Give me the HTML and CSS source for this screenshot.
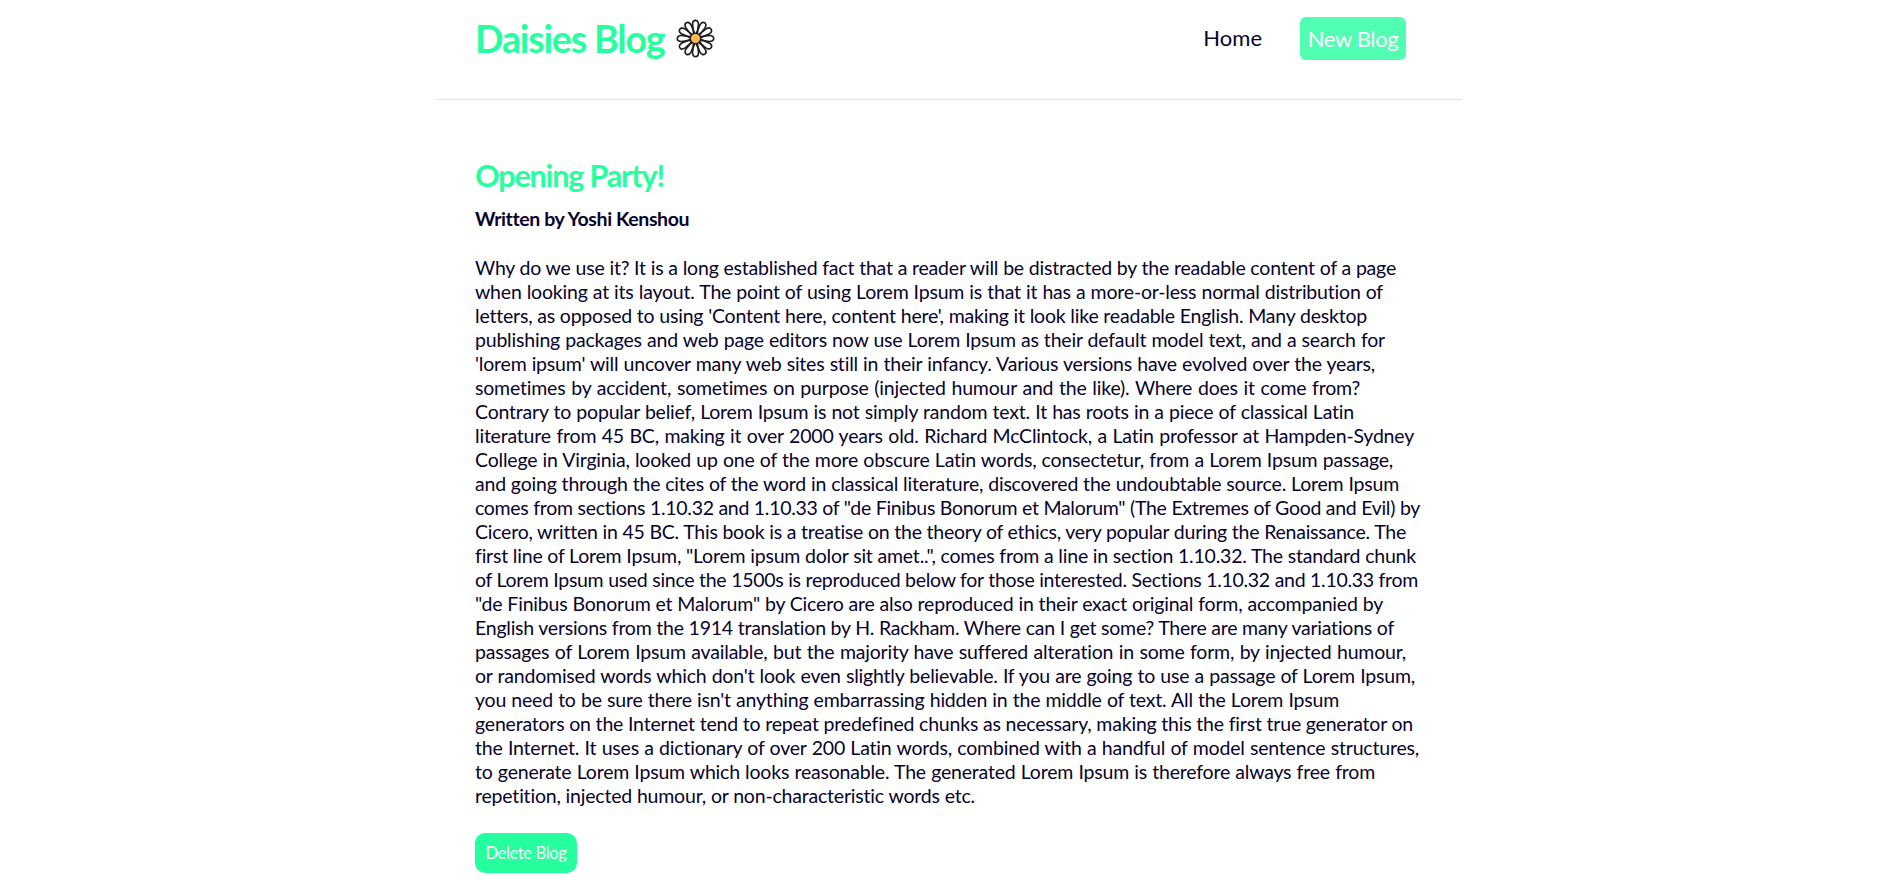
FILE: index.html
```
<!DOCTYPE html>
<html lang="en">
<head>
<meta charset="utf-8">
<title>Daisies Blog</title>
<link rel="stylesheet" href="styles.css">
</head>
<body>
<div class="page">
  <header class="navbar">
    <h1 class="brand"><span class="brand-name">Daisies Blog</span>
      <svg class="daisy" viewBox="-20 -20 40 40" aria-hidden="true">
        <defs><path id="petal" d="M0-3C-2-7-2.9-10-2.9-13.7C-2.9-19.1 2.9-19.1 2.9-13.7C2.9-10 2-7 0-3Z"/></defs>
        <g class="petals">
          <use href="#petal"/><use href="#petal" transform="rotate(30)"/><use href="#petal" transform="rotate(60)"/><use href="#petal" transform="rotate(90)"/><use href="#petal" transform="rotate(120)"/><use href="#petal" transform="rotate(150)"/><use href="#petal" transform="rotate(180)"/><use href="#petal" transform="rotate(210)"/><use href="#petal" transform="rotate(240)"/><use href="#petal" transform="rotate(270)"/><use href="#petal" transform="rotate(300)"/><use href="#petal" transform="rotate(330)"/>
        </g>
        <circle class="eye" r="5"/>
      </svg>
    </h1>
    <nav class="links"><a class="home">Home</a><a class="new-blog">New Blog</a></nav>
  </header>
  <article class="post">
    <h2 class="title">Opening Party!</h2>
    <p class="author">Written by Yoshi Kenshou</p>
    <div class="body">
      <span style="width:921px">Why do we use it? It is a long established fact that a reader will be distracted by the readable content of a page</span>
      <span style="width:908px">when looking at its layout. The point of using Lorem Ipsum is that it has a more-or-less normal distribution of</span>
      <span style="width:892px">letters, as opposed to using 'Content here, content here', making it look like readable English. Many desktop</span>
      <span style="width:910px">publishing packages and web page editors now use Lorem Ipsum as their default model text, and a search for</span>
      <span style="width:900px">'lorem ipsum' will uncover many web sites still in their infancy. Various versions have evolved over the years,</span>
      <span style="width:885px">sometimes by accident, sometimes on purpose (injected humour and the like). Where does it come from?</span>
      <span style="width:879px">Contrary to popular belief, Lorem Ipsum is not simply random text. It has roots in a piece of classical Latin</span>
      <span style="width:939px">literature from 45 BC, making it over 2000 years old. Richard McClintock, a Latin professor at Hampden-Sydney</span>
      <span style="width:918px">College in Virginia, looked up one of the more obscure Latin words, consectetur, from a Lorem Ipsum passage,</span>
      <span style="width:924px">and going through the cites of the word in classical literature, discovered the undoubtable source. Lorem Ipsum</span>
      <span class="tight" style="width:945px">comes from sections 1.10.32 and 1.10.33 of "de Finibus Bonorum et Malorum" (The Extremes of Good and Evil) by</span>
      <span class="snug" style="width:931px">Cicero, written in 45 BC. This book is a treatise on the theory of ethics, very popular during the Renaissance. The</span>
      <span style="width:941px">first line of Lorem Ipsum, "Lorem ipsum dolor sit amet..", comes from a line in section 1.10.32. The standard chunk</span>
      <span class="tight" style="width:943px">of Lorem Ipsum used since the 1500s is reproduced below for those interested. Sections 1.10.32 and 1.10.33 from</span>
      <span style="width:908px">"de Finibus Bonorum et Malorum" by Cicero are also reproduced in their exact original form, accompanied by</span>
      <span class="snug" style="width:919px">English versions from the 1914 translation by H. Rackham. Where can I get some? There are many variations of</span>
      <span style="width:931px">passages of Lorem Ipsum available, but the majority have suffered alteration in some form, by injected humour,</span>
      <span style="width:940px">or randomised words which don't look even slightly believable. If you are going to use a passage of Lorem Ipsum,</span>
      <span style="width:864px">you need to be sure there isn't anything embarrassing hidden in the middle of text. All the Lorem Ipsum</span>
      <span style="width:938px">generators on the Internet tend to repeat predefined chunks as necessary, making this the first true generator on</span>
      <span style="width:944px">the Internet. It uses a dictionary of over 200 Latin words, combined with a handful of model sentence structures,</span>
      <span style="width:900px">to generate Lorem Ipsum which looks reasonable. The generated Lorem Ipsum is therefore always free from</span>
      <span style="width:500px">repetition, injected humour, or non-characteristic words etc.</span>
    </div>
    <button class="delete">Delete Blog</button>
  </article>
</div>
</body>
</html>
```

FILE: styles.css
```
* { box-sizing: border-box; margin: 0; padding: 0; }
body { background: #fff; color: #08042c; font-family: Lato, "Open Sans", sans-serif; overflow: hidden; }
.page { width: 1025px; margin-left: 437px; }
.navbar { height: 100px; padding: 17px 56px 0 38px; border-bottom: 1px solid #e1e5c8; display: flex; justify-content: space-between; align-items: flex-start; }
.brand { display: flex; align-items: center; gap: 11px; height: 43px; font-size: 37.5px; line-height: 43px; font-weight: 700; color: #26ff9d; letter-spacing: -1.15px; white-space: nowrap; }
.daisy { width: 41px; height: 41px; }
.petals { fill: #fff; stroke: #1c1c20; stroke-width: 1.6; }
.eye { fill: #fdb94e; stroke: #1c1c20; stroke-width: 1.1; }
.links { display: flex; font-size: 22px; line-height: 42px; gap: 38px; }
.new-blog { width: 106px; height: 43px; border-radius: 6px; background: #50ffb1; color: #fff; line-height: 43px; letter-spacing: -.35px; text-align: center; white-space: nowrap; }
.post { padding: 55px 38px 0; }
.title { font-size: 30.5px; line-height: 40px; color: #26ff9d; letter-spacing: -1.15px; }
.author { margin-top: 12px; font-size: 19.5px; line-height: 24px; font-weight: 700; letter-spacing: -.4px; }
.body { margin-top: 25px; font-size: 19.5px; line-height: 24px; letter-spacing: -.2px; }
.body span { display: block; height: 24px; white-space: normal; text-align: justify; text-align-last: justify; }
.body .snug { letter-spacing: -.24px; }
.body .tight { letter-spacing: -.3px; }
.delete { display: block; margin-top: 25px; width: 102px; height: 40px; border: 0; border-radius: 10px; background: #26ff9d; color: #fff; font: 16.5px Lato, sans-serif; letter-spacing: -.35px; white-space: nowrap; }
```
